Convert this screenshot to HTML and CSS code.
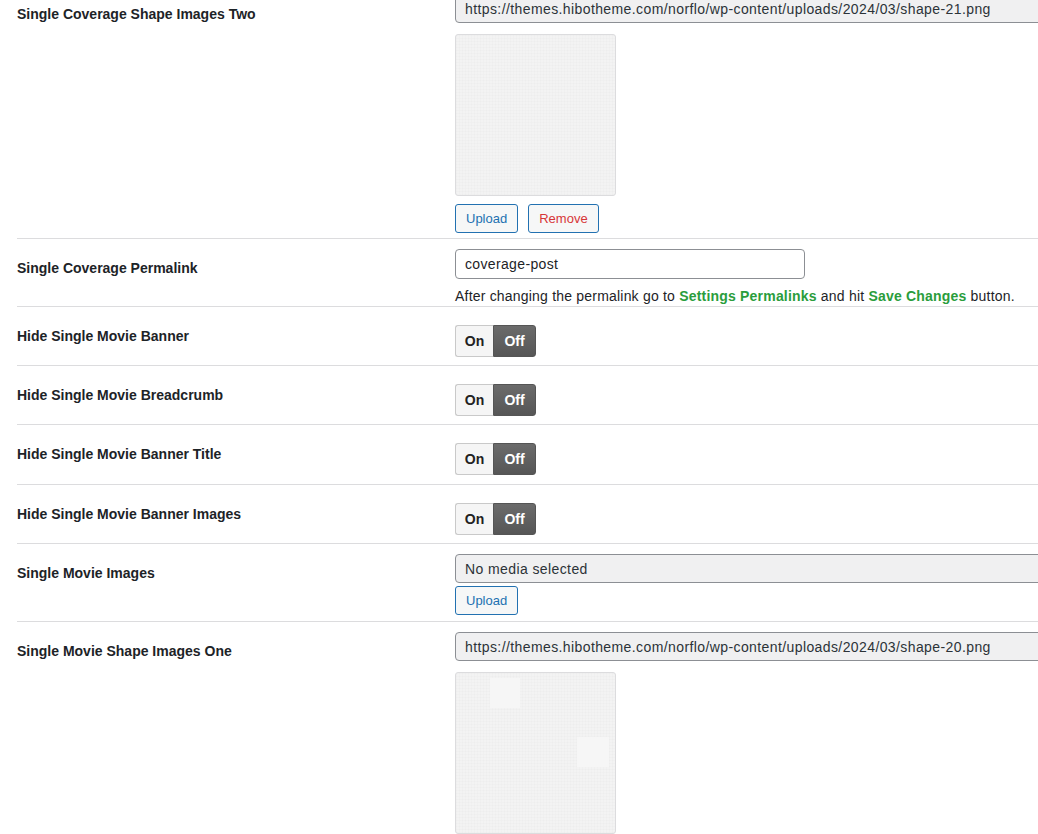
FILE: index.html
```html
<!DOCTYPE html>
<html lang="en">
<head>
<meta charset="utf-8">
<title>Settings</title>
<link rel="stylesheet" href="styles.css">
</head>
<body>
<div class="settings">
  <div class="row">
    <div class="label">Single Coverage Shape Images Two</div>
    <div class="field field-media">
      <input class="url" type="text" readonly value="https://themes.hibotheme.com/norflo/wp-content/uploads/2024/03/shape-21.png">
      <div class="preview"></div>
      <div class="btns">
        <button class="btn" type="button">Upload</button>
        <button class="btn remove" type="button">Remove</button>
      </div>
    </div>
  </div>

  <div class="row">
    <div class="label">Single Coverage Permalink</div>
    <div class="field field-text">
      <input class="text" type="text" value="coverage-post">
      <div class="desc">After changing the permalink go to <b class="green">Settings Permalinks</b> and hit <b class="green">Save Changes</b> button.</div>
    </div>
  </div>

  <div class="row">
    <div class="label">Hide Single Movie Banner</div>
    <div class="field field-toggle">
      <div class="toggle"><span class="on">On</span><span class="off">Off</span></div>
    </div>
  </div>

  <div class="row">
    <div class="label">Hide Single Movie Breadcrumb</div>
    <div class="field field-toggle">
      <div class="toggle"><span class="on">On</span><span class="off">Off</span></div>
    </div>
  </div>

  <div class="row">
    <div class="label">Hide Single Movie Banner Title</div>
    <div class="field field-toggle field-toggle-tall">
      <div class="toggle"><span class="on">On</span><span class="off">Off</span></div>
    </div>
  </div>

  <div class="row">
    <div class="label">Hide Single Movie Banner Images</div>
    <div class="field field-toggle">
      <div class="toggle"><span class="on">On</span><span class="off">Off</span></div>
    </div>
  </div>

  <div class="row">
    <div class="label">Single Movie Images</div>
    <div class="field field-empty">
      <input class="url" type="text" readonly value="No media selected">
      <div class="btns btns-tight">
        <button class="btn" type="button">Upload</button>
      </div>
    </div>
  </div>

  <div class="row">
    <div class="label">Single Movie Shape Images One</div>
    <div class="field field-media">
      <input class="url" type="text" readonly value="https://themes.hibotheme.com/norflo/wp-content/uploads/2024/03/shape-20.png">
      <div class="preview preview-two"><span class="blk blk-a"></span><span class="blk blk-b"></span></div>
    </div>
  </div>
</div>
</body>
</html>
```

FILE: styles.css
```css
html, body {
  margin: 0;
  padding: 0;
  background: #ffffff;
  overflow: hidden;
}

body {
  width: 1038px;
  height: 834px;
  font-family: "Liberation Sans", Arial, sans-serif;
  font-size: 14px;
  color: #1d2327;
}

.settings {
  margin: -16px 0 0 17px;
  width: 1100px;
}

.row {
  display: grid;
  grid-template-columns: 438px 1fr;
  border-bottom: 1px solid #dcdcde;
}

.label {
  padding-top: 21px;
  font-weight: 700;
  font-size: 14px;
  line-height: 18px;
  color: #1d2327;
}

.row + .row .label {
  padding-top: 20px;
}

.field {
  padding-top: 10px;
}

.field-media {
  padding-bottom: 5px;
}

.field-empty {
  padding-bottom: 6px;
}

.field-toggle {
  padding: 18px 0 8px;
}

.field-toggle-tall {
  padding-bottom: 9px;
}

.url {
  display: block;
  box-sizing: border-box;
  width: 700px;
  height: 29px;
  margin: 0;
  padding: 0 9px;
  border: 1px solid #8c8f94;
  border-radius: 4px;
  background: #f0f0f1;
  font-family: "Liberation Sans", Arial, sans-serif;
  font-size: 14px;
  letter-spacing: 0.4px;
  color: #2c3338;
  outline: none;
}

.text {
  display: block;
  box-sizing: border-box;
  width: 350px;
  height: 30px;
  margin: 0;
  padding: 0 9px;
  border: 1px solid #8c8f94;
  border-radius: 4px;
  background: #ffffff;
  font-family: "Liberation Sans", Arial, sans-serif;
  font-size: 14px;
  letter-spacing: 0.35px;
  color: #1d2327;
  outline: none;
}

.desc {
  margin-top: 7px;
  line-height: 20px;
  letter-spacing: 0.2px;
  color: #1d2327;
}

.green {
  color: #2a9d3c;
  font-weight: 700;
}

.preview {
  position: relative;
  box-sizing: border-box;
  width: 161px;
  height: 162px;
  margin-top: 11px;
  border: 1px solid #dcdcde;
  border-radius: 3px;
  background-color: #f3f3f3;
  background-image:
    repeating-linear-gradient(0deg, rgba(0,0,0,0.01) 0 1px, transparent 1px 3px),
    repeating-linear-gradient(90deg, rgba(0,0,0,0.01) 0 1px, transparent 1px 3px);
}

.blk {
  position: absolute;
  background: #f6f6f6;
}

.blk-a {
  left: 34px;
  top: 5px;
  width: 30px;
  height: 30px;
}

.blk-b {
  left: 121px;
  top: 64px;
  width: 32px;
  height: 30px;
}

.btns {
  display: flex;
  gap: 10px;
  margin-top: 8px;
}

.btns-tight {
  margin-top: 3px;
}

.btn {
  box-sizing: border-box;
  height: 29px;
  margin: 0;
  padding: 0 10px;
  border: 1px solid #2271b1;
  border-radius: 3px;
  background: #f6f7f7;
  color: #2271b1;
  font-family: "Liberation Sans", Arial, sans-serif;
  font-size: 13px;
  line-height: 27px;
  cursor: pointer;
}

.btn.remove {
  color: #d63638;
}

.toggle {
  display: inline-flex;
  height: 32px;
  border-radius: 3px;
}

.on,
.off {
  display: flex;
  align-items: center;
  justify-content: center;
  box-sizing: border-box;
  height: 32px;
  font-weight: 700;
  font-size: 14px;
}

.on {
  width: 38px;
  background: #f5f5f5;
  border: 1px solid #c9c9c9;
  border-right: 0;
  border-radius: 3px 0 0 3px;
  color: #222222;
}

.off {
  width: 43px;
  background: linear-gradient(#6b6b6b, #565656);
  border: 1px solid #555555;
  border-radius: 0 3px 3px 0;
  color: #ffffff;
}
```
